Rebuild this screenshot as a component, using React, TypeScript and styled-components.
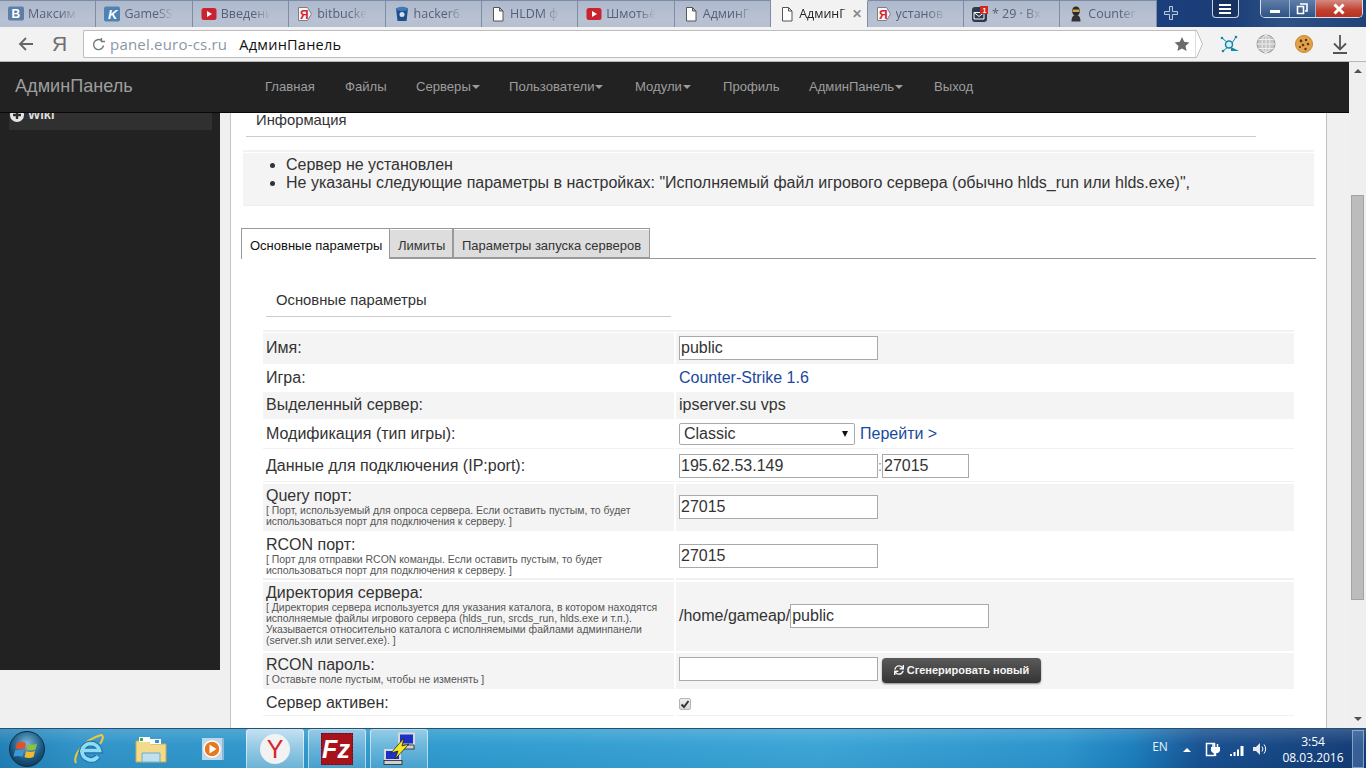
import React, { ReactNode } from "react";
import styled, { createGlobalStyle } from "styled-components";
import { FaSync } from "react-icons/fa";

const Global = createGlobalStyle`
  html, body { margin: 0; padding: 0; width: 1366px; height: 768px; overflow: hidden; }
  body { font-family: "Liberation Sans", Arial, sans-serif; color: #333; background: #f1f1f1; }
  * { box-sizing: border-box; }
`;

const Screen = styled.div`
  width: 1366px; height: 768px; display: flex; flex-direction: column; overflow: hidden;
`;

/* browser tab strip */
const TabStrip = styled.div`
  height: 27px; display: flex; flex: none;
  background: linear-gradient(90deg, #1d3f78 0%, #1a3f7c 85%, #1c3d76 90%, #2c5288 94%, #1f4279 100%);
`;
const BrowserTab = styled.div<{ $active?: boolean }>`
  width: 96.4px; height: 27px; flex: none; display: flex; align-items: center; gap: 4px;
  padding: 0 0 1px 8px;
  font: 12.5px "Open Sans", sans-serif;
  color: ${p => (p.$active ? "#222" : "#56607a")};
  background: ${p => (p.$active ? "#f2f2f2" : "linear-gradient(180deg,#aeb9cc,#b9c2d2 70%,#b4bfd0)")};
  border-right: 1px solid #7f8ca6;
  border-top: 1px solid ${p => (p.$active ? "#f2f2f2" : "#7e8ba8")};
`;
const TabIconBox = styled.span`
  width: 16px; height: 16px; flex: none; display: block;
  svg { display: block; }
`;
const TabLabel = styled.span<{ $active?: boolean }>`
  display: block; width: ${p => (p.$active ? "48px" : "50px")}; white-space: nowrap; overflow: hidden;
  -webkit-mask-image: linear-gradient(90deg, #000 ${p => (p.$active ? "88%" : "65%")}, transparent 100%);
  mask-image: linear-gradient(90deg, #000 ${p => (p.$active ? "88%" : "65%")}, transparent 100%);
`;
const TabClose = styled.span`
  margin-left: 1px; font: bold 12px "Liberation Sans", sans-serif; color: #8a8a8a;
`;
const NewTab = styled.div`
  margin: 5px 0 0 6px; width: 16px; height: 16px; flex: none;
`;
const MenuButton = styled.div`
  margin-left: 33px; width: 27px; height: 18px; flex: none;
  border: 1px solid #c4d3e6; border-top: none; border-radius: 0 0 4px 4px;
  background: rgba(20,40,80,.55);
  display: flex; align-items: center; justify-content: center;
`;
const WindowButtons = styled.div`
  margin: 0 4px 0 21px; height: 18px; width: 103px; flex: none; display: flex;
  border: 1px solid #d7e0ec; border-top: none; border-radius: 0 0 5px 5px; overflow: hidden;
`;
const WindowButton = styled.div<{ $w: number; $close?: boolean }>`
  width: ${p => p.$w}px; flex: none; display: flex; align-items: center; justify-content: center;
  border-right: ${p => (p.$close ? "none" : "1px solid #9fb2cc")};
  background: ${p => (p.$close ? "linear-gradient(180deg,#d58a82,#c2402f 60%,#b8321f)" : "linear-gradient(180deg,#5f7fa8,#2f5285)")};
`;

/* toolbar */
const Toolbar = styled.div`
  height: 35px; flex: none; display: flex; align-items: center; background: #f2f2f2;
  border-bottom: 1px solid #b6b6b6; padding-bottom: 0;
`;
const BackSlot = styled.div`
  width: 52px; padding-left: 18px; flex: none; display: flex; align-items: center;
`;
const YaGlyph = styled.div`
  width: 31px; flex: none; padding-left: 0; font: 21px "Liberation Sans", sans-serif; color: #6f6f6f;
`;
const AddressBox = styled.div`
  width: 1112px; height: 28px; flex: none; display: flex; align-items: center;
  background: #fff; border: 1px solid #bdbdbd; border-right: none; border-radius: 2px 0 0 2px;
  padding-left: 7px;
`;
const Url = styled.span`
  margin-left: 4px; font: 15px "Open Sans", sans-serif; letter-spacing: .2px; color: #8b96a6;
`;
const PageName = styled.span`
  margin-left: 12px; font: 14.5px "Open Sans", sans-serif; letter-spacing: .25px; color: #111;
`;
const StarSlot = styled.span`
  margin-left: auto; margin-right: 5px; display: flex;
`;
const AddressTip = styled.svg`
  flex: none; display: block;
`;
const ExtSlot = styled.div<{ $ml: number }>`
  margin-left: ${p => p.$ml}px; width: 24px; height: 24px; flex: none;
  svg { display: block; }
`;

/* viewport */
const Viewport = styled.div`
  flex: 1; min-height: 0; display: flex;
`;
const PageColumn = styled.div`
  width: 1349px; flex: none; display: flex; flex-direction: column;
`;
const Navbar = styled.nav`
  height: 51px; flex: none; display: flex; align-items: center; background: #222;
  border-bottom: 1px solid #080808; padding-bottom: 1px;
`;
const Brand = styled.div`
  width: 250px; flex: none; padding-left: 15px; font-size: 18.1px; color: #9d9d9d;
`;
const NavItem = styled.div<{ $w: number }>`
  width: ${p => p.$w}px; flex: none; padding-left: 15px; font-size: 13.1px; color: #9d9d9d;
  display: flex; align-items: center; white-space: nowrap;
`;
const Caret = styled.span`
  margin-left: 1px; margin-top: 1px; width: 0; height: 0;
  border-top: 4px solid #9d9d9d; border-left: 4px solid transparent; border-right: 4px solid transparent;
`;
const PageBody = styled.div`
  flex: 1; min-height: 0; display: flex; align-items: flex-start; background: #f0f0f0;
`;
const Sidebar = styled.aside`
  width: 220px; height: 557px; flex: none; background: #222; padding-left: 9px;
`;
const WikiItem = styled.div`
  width: 203px; height: 17px; background: #303030; overflow: hidden;
`;
const WikiInner = styled.div`
  margin-top: -7px; padding-left: 1px; display: flex; align-items: center; gap: 4px;
  font: bold 13px/18px "Liberation Sans", sans-serif; color: #ddd;
`;
const WikiBullet = styled.span`
  width: 14px; height: 14px; flex: none; display: block;
  svg { display: block; }
`;
const Panel = styled.main`
  width: 1097px; height: 615px; margin-left: 10px; flex: none; overflow: hidden; background: #fff;
  border-left: 1px solid #c6c6c6; border-right: 1px solid #c0c0c0; padding-left: 12px;
`;
const SectionTitle = styled.h3<{ $w: number; $ml: number }>`
  margin: 0 0 0 ${p => p.$ml}px; width: ${p => p.$w}px; padding: 0 0 9px 10px;
  font-weight: normal; font-size: 14.8px; line-height: 14px; color: #333;
  border-bottom: 1px solid #ccc;
`;
const NoticeWrap = styled.div`
  margin-top: 13px; width: 1071px; border-top: 2px solid #f2f2f2; padding-top: 1px;
`;
const Notice = styled.ul`
  margin: 0; height: 53px; padding: 3px 0 0 43px; background: #f4f4f4;
  border-bottom: 1px solid #eee;
  font-size: 16px; line-height: 18px; color: #333;
`;
const FormTabs = styled.div`
  margin: 22px 0 0 -2px; width: 1075px; height: 31px; display: flex; border-bottom: 1px solid #999;
`;
const FormTab = styled.div<{ $w: number; $active?: boolean }>`
  width: ${p => p.$w}px; height: ${p => (p.$active ? "31px" : "30px")}; flex: none;
  border: 1px solid #999; border-bottom: ${p => (p.$active ? "none" : "1px solid #999")};
  border-right: ${p => (p.$active ? "none" : "1px solid #999")};
  background: ${p => (p.$active ? "#fff" : "#ddd")};
  box-shadow: ${p => (p.$active ? "none" : "inset 0 1px 0 #fff")};
  font-size: 13px; line-height: 14px; color: ${p => (p.$active ? "#111" : "#333")};
  padding: 10px 0 0 8px;
  white-space: nowrap;
`;
const FormSection = styled.section`
  margin: 34px 0 0 20px; width: 1031px;
`;
const FormTable = styled.div`
  margin-top: 13px; border-top: 2px solid #f2f2f2;
`;
const Row = styled.div<{ $h: number; $gap?: number; $gray?: boolean; $rule?: number }>`
  height: ${p => p.$h}px; margin-top: ${p => p.$gap ?? 0}px;
  display: grid; grid-template-columns: 411px 618px; column-gap: 2px;
  & > div {
    background: ${p => (p.$gray ? "#f4f4f4" : "#fff")};
    border-bottom: ${p => p.$rule ?? 0}px solid #f0f0f0;
  }
`;
const nudge = (dy = 0) => `padding-top: ${Math.max(dy * 2, 0)}px; padding-bottom: ${Math.max(-dy * 2, 0)}px;`;
const LabelCell = styled.div<{ $dy?: number }>`
  padding-left: 3px; display: flex; flex-direction: column; justify-content: center;
  ${p => nudge(p.$dy)}
`;
const ValueCell = styled.div<{ $dy?: number }>`
  padding-left: 3px; display: flex; align-items: center; font-size: 16px; color: #333;
  ${p => nudge(p.$dy)}
`;
const Label = styled.div`
  font-size: 16px; line-height: 18px; color: #333;
`;
const Hint = styled.div`
  font-size: 10.45px; line-height: 11px; color: #555; white-space: nowrap;
`;
const Field = styled.input<{ $w?: number }>`
  width: ${p => p.$w ?? 199}px; height: 24px; padding: 0 1px; flex: none;
  border: 1px solid #a9a9a9; border-radius: 0; background: #fff;
  font: 16px "Liberation Sans", sans-serif; color: #333; outline: none;
`;
const GameLink = styled.a`
  color: #1a4a9c; text-decoration: none; font-size: 16px;
`;
const SelectWrap = styled.div`
  position: relative; width: 176px; height: 22px; flex: none;
`;
const Select = styled.select`
  appearance: none; width: 176px; height: 22px; padding: 0 0 0 4px;
  border: 1px solid #a9a9a9; border-radius: 2px; background: #fff;
  font: 16px "Liberation Sans", sans-serif; color: #333; outline: none;
`;
const SelectArrow = styled.span`
  position: absolute; right: 7px; top: 8px; width: 0; height: 0;
  border-top: 6px solid #111; border-left: 3px solid transparent; border-right: 3px solid transparent;
`;
const GoLink = styled.a`
  margin-left: 5px; color: #1a4a9c; text-decoration: none; font-size: 16px;
`;
const Colon = styled.span`
  width: 4px; flex: none; font-size: 14px; color: #888;
`;
const GenerateButton = styled.button`
  margin-left: 4px; width: 159px; height: 25px; padding: 0; flex: none; margin-top: 2px;
  display: flex; align-items: center; justify-content: center; gap: 3px;
  border: none; border-radius: 4px;
  background: linear-gradient(180deg, #5a5a5a, #333);
  box-shadow: 0 1px 2px rgba(0,0,0,.45);
  font: bold 11px "Liberation Sans", sans-serif; color: #f4f4f4;
`;
const CheckBox = styled.span`
  width: 12px; height: 12px; flex: none; display: flex; align-items: center; justify-content: center;
  border: 1px solid #b5b5b5; border-radius: 2px; background: linear-gradient(180deg,#eee,#d8d8d8);
`;

/* scrollbar */
const Scrollbar = styled.div`
  width: 17px; flex: none; display: flex; flex-direction: column; align-items: center; background: #efefef;
`;
const ArrowSlot = styled.div`
  height: 17px; display: flex; align-items: center; justify-content: center; flex: none;
`;
const ArrowUp = styled.span`
  width: 0; height: 0; border-bottom: 4px solid #505050; border-left: 4px solid transparent; border-right: 4px solid transparent;
`;
const ArrowDown = styled.span`
  width: 0; height: 0; border-top: 4px solid #505050; border-left: 4px solid transparent; border-right: 4px solid transparent;
`;
const Thumb = styled.div`
  margin-top: 116px; width: 13px; height: 405px; background: #bcbcbc; border: 1px solid #a3a3a3; flex: none;
`;
const BottomSlot = styled(ArrowSlot)`
  margin-top: auto; margin-bottom: 1px;
`;

/* taskbar */
const Taskbar = styled.footer`
  height: 40px; flex: none; display: flex; align-items: stretch;
  border-top: 1px solid #25506f;
  background:
    linear-gradient(180deg, rgba(255,255,255,.16), rgba(255,255,255,.02) 40%, rgba(0,0,0,.03)),
    linear-gradient(90deg, #1f7fb6 0%, #2f93c8 6%, #2f9bd0 35%, #3aa3d6 60%, #2a93cc 78%, #1a7dbc 83%, #164f90 88%, #123a74 100%);
`;
const PinSlot = styled.div<{ $w: number }>`
  width: ${p => p.$w}px; flex: none; display: flex; align-items: center; justify-content: center;
`;
const TaskButton = styled.div<{ $bright?: boolean }>`
  width: 58px; margin-right: 4px; flex: none; display: flex; align-items: center; justify-content: center;
  border: 1px solid rgba(255,255,255,.55); border-bottom: none; border-radius: 3px 3px 0 0;
  background: ${p => (p.$bright
    ? "linear-gradient(180deg,rgba(255,255,255,.65),rgba(255,255,255,.3))"
    : "linear-gradient(180deg,rgba(255,255,255,.4),rgba(255,255,255,.12))")};
`;
const Tray = styled.div`
  margin-left: auto; display: flex; align-items: center; color: #fff;
`;
const Lang = styled.div`
  width: 30px; font: 12px "Open Sans", sans-serif; color: #e8f2fa; margin-top: -5px; text-align: center;
`;
const TrayIcon = styled.div<{ $ml: number }>`
  margin-left: ${p => p.$ml}px; width: 16px; height: 16px; flex: none;
  svg { display: block; }
`;
const Clock = styled.div`
  margin-left: 10px; width: 70px; padding-top: 2px; text-align: center; font: 12px/16px "Open Sans", sans-serif; color: #fff;
`;
const ShowDesktop = styled.div`
  margin: 1px 2px 0 4px; width: 12px; align-self: stretch;
  border: 1px solid rgba(180,205,235,.6); background: rgba(120,160,210,.35);
`;

const Svg = ({ s = 16, vb, children }: { s?: number; vb?: string; children: ReactNode }) => (
  <svg width={s} height={s} viewBox={vb ?? `0 0 ${s} ${s}`}>{children}</svg>
);

const DocIcon = () => (
  <Svg><path d="M3.5 1.5h6l3.5 3.5v10h-9.5z M9.5 1.5v3.5h3.5" fill="#fff" stroke="#555" strokeWidth="1" /></Svg>
);
const YouTubeIcon = () => (
  <Svg><rect x="0.5" y="2" width="15" height="12" rx="2.5" fill="#c9232f" /><path d="M6 5l5 3-5 3z" fill="#fff" /></Svg>
);
const YandexTabIcon = () => (
  <Svg>
    <path d="M1.5 1.5h9l4 6.500-4 6.500h-9z" fill="#f6f6f6" stroke="#7a7f8c" />
    <text x="3" y="12.500" fontFamily="Liberation Sans" fontSize="12" fontWeight="bold" fill="#d8242c">Я</text>
  </Svg>
);

const tabs: { icon: ReactNode; label: string; active?: boolean }[] = [
  { label: "Максим", icon: <Svg><rect x="0" y="0.5" width="16" height="14" rx="2" fill="#5b7fa8" /><text x="3.500" y="12" fontFamily="Liberation Sans" fontSize="12" fontWeight="bold" fill="#fff">В</text></Svg> },
  { label: "GameSS", icon: <Svg><rect x="0" y="0.5" width="16" height="15" rx="2" fill="#4f82b4" /><text x="4" y="13" fontFamily="Liberation Sans" fontSize="13" fontWeight="bold" fontStyle="italic" fill="#fff">K</text></Svg> },
  { label: "Введени", icon: <YouTubeIcon /> },
  { label: "bitbucke", icon: <YandexTabIcon /> },
  { label: "hacker6.", icon: <Svg><path d="M2 2.500h12l-1.500 12.500h-9z" fill="#1f4f88" /><ellipse cx="8" cy="3" rx="6" ry="2.200" fill="#3f78b4" /><circle cx="8" cy="8.500" r="2.500" fill="#cfe0f0" /></Svg> },
  { label: "HLDM ф", icon: <DocIcon /> },
  { label: "Шмотьё", icon: <YouTubeIcon /> },
  { label: "АдминГ", icon: <DocIcon /> },
  { label: "АдминГ", icon: <DocIcon />, active: true },
  { label: "установ", icon: <YandexTabIcon /> },
  { label: "* 29 · Вх", icon: <Svg><rect x="0" y="1" width="15" height="15" rx="3" fill="#2d3a4c" /><path d="M2 6.500h10v6.500h-10z M2 6.500l5 4 5-4" fill="none" stroke="#fff" strokeWidth="1" /><rect x="8" y="0" width="8" height="8" fill="#d8261e" /><text x="10.500" y="6.800" fontFamily="Liberation Sans" fontSize="7" fontWeight="bold" fill="#fff">1</text></Svg> },
  { label: "Counter", icon: <Svg><ellipse cx="8" cy="5" rx="4" ry="4.500" fill="#2a2a2a" /><rect x="4.500" y="3.500" width="7" height="2.500" fill="#c9a640" /><path d="M3.500 15.500c0-5 2-6.500 4.500-6.500s4.500 1.500 4.500 6.500z" fill="#333" /></Svg> },
];

const navItems: { label: string; w: number; caret?: boolean }[] = [
  { label: "Главная", w: 80 }, { label: "Файлы", w: 71 }, { label: "Серверы", w: 93, caret: true },
  { label: "Пользователи", w: 126, caret: true }, { label: "Модули", w: 88, caret: true }, { label: "Профиль", w: 86 },
  { label: "АдминПанель", w: 125, caret: true }, { label: "Выход", w: 80 },
];

export default function App() {
  return (
    <Screen>
      <Global />
      <TabStrip>
        {tabs.map((t, i) => (
          <BrowserTab key={i} $active={t.active}>
            <TabIconBox>{t.icon}</TabIconBox>
            <TabLabel $active={t.active}>{t.label}</TabLabel>
            {t.active && <TabClose>✕</TabClose>}
          </BrowserTab>
        ))}
        <NewTab>
          <Svg><path d="M6.500 1.500h3v5h5v3h-5v5h-3v-5h-5v-3h5z" fill="rgba(60,100,160,.4)" stroke="#b9c8dc" /></Svg>
        </NewTab>
        <MenuButton>
          <Svg s={14}><path d="M1 3h12M1 7h12M1 11h12" stroke="#fff" strokeWidth="2" /></Svg>
        </MenuButton>
        <WindowButtons>
          <WindowButton $w={29}><Svg s={12}><rect x="1" y="7" width="10" height="3" fill="#fff" /></Svg></WindowButton>
          <WindowButton $w={26}><Svg s={12}><path d="M4 1h7v7h-2M1.500 3.500h6v7h-6z" fill="none" stroke="#fff" strokeWidth="1.600" /></Svg></WindowButton>
          <WindowButton $w={47} $close><Svg s={14}><path d="M2.500 2.500l9 9M11.500 2.500l-9 9" stroke="#fff" strokeWidth="3" /></Svg></WindowButton>
        </WindowButtons>
      </TabStrip>

      <Toolbar>
        <BackSlot>
          <Svg><path d="M15 8H2M8 2L2 8l6 6" fill="none" stroke="#666" strokeWidth="1.800" /></Svg>
        </BackSlot>
        <YaGlyph>Я</YaGlyph>
        <AddressBox>
          <Svg s={15}><path d="M12.500 8.500a5 5 0 1 1-2-5M10.500 1v3.500H14" fill="none" stroke="#777" strokeWidth="1.400" /></Svg>
          <Url>panel.euro-cs.ru</Url>
          <PageName>АдминПанель</PageName>
          <StarSlot>
            <Svg><path d="M8 1l2.200 4.800 5.200.6-3.900 3.500 1.100 5.100L8 12.400 3.400 15l1.100-5.100L.6 6.400l5.200-.6z" fill="#6a6a6a" /></Svg>
          </StarSlot>
        </AddressBox>
        <AddressTip width="8" height="28" viewBox="0 0 8 28">
          <path d="M0 .5h1.500L7.500 14l-6 13.500H0z" fill="#fff" stroke="#bdbdbd" />
        </AddressTip>
        <ExtSlot $ml={14}>
          <Svg s={24}>
            <path d="M5 6l6 5M19 5l-4 6M6 19l5-4" stroke="#1d7f9e" strokeWidth="1" />
            <circle cx="12" cy="12.500" r="3.500" fill="#d8f0f7" stroke="#0f86ab" strokeWidth="1.500" />
            <circle cx="5" cy="6" r="1.300" fill="#0f86ab" /><circle cx="19" cy="5" r="1.300" fill="#0f86ab" /><circle cx="6" cy="19" r="1.300" fill="#0f86ab" />
            <path d="M14 15l8 4h-8z" fill="#0f86ab" />
          </Svg>
        </ExtSlot>
        <ExtSlot $ml={13}>
          <Svg s={24}>
            <circle cx="12" cy="12" r="9" fill="#c4c4c4" stroke="#999" />
            <ellipse cx="12" cy="12" rx="4" ry="9" fill="none" stroke="#eee" />
            <path d="M3 12h18M4.500 7.500h15M4.500 16.500h15M12 3v18" stroke="#eee" />
          </Svg>
        </ExtSlot>
        <ExtSlot $ml={14}>
          <Svg s={24}>
            <circle cx="12" cy="12" r="8.500" fill="#e2a24c" stroke="#c9862e" />
            <circle cx="9" cy="9" r="1.400" fill="#5e3413" /><circle cx="14" cy="8" r="1.200" fill="#5e3413" />
            <circle cx="16" cy="12" r="1.300" fill="#5e3413" /><circle cx="11" cy="13" r="1.300" fill="#5e3413" />
            <circle cx="8" cy="15" r="1.100" fill="#5e3413" /><circle cx="13.500" cy="17" r="1.200" fill="#5e3413" />
          </Svg>
        </ExtSlot>
        <ExtSlot $ml={12}>
          <Svg s={24}><path d="M12 3v14M6 11.500l6 6 6-6" fill="none" stroke="#555" strokeWidth="1.800" /><path d="M5 21h14" stroke="#555" strokeWidth="2" /></Svg>
        </ExtSlot>
      </Toolbar>

      <Viewport>
        <PageColumn>
          <Navbar>
            <Brand>АдминПанель</Brand>
            {navItems.map(n => (
              <NavItem key={n.label} $w={n.w}>{n.label}{n.caret && <Caret />}</NavItem>
            ))}
          </Navbar>
          <PageBody>
            <Sidebar>
              <WikiItem>
                <WikiInner>
                  <WikiBullet>
                    <Svg s={14}><circle cx="7" cy="7" r="7" fill="#e6e6e6" /><path d="M7 3v8M3 7h8" stroke="#303030" strokeWidth="2.400" /></Svg>
                  </WikiBullet>
                  Wiki
                </WikiInner>
              </WikiItem>
            </Sidebar>
            <Panel>
              <SectionTitle $w={1010} $ml={3}>Информация</SectionTitle>
              <NoticeWrap>
                <Notice>
                  <li>Сервер не установлен</li>
                  <li>Не указаны следующие параметры в настройках: "Исполняемый файл игрового сервера (обычно hlds_run или hlds.exe)",</li>
                </Notice>
              </NoticeWrap>
              <FormTabs>
                <FormTab $w={148} $active>Основные параметры</FormTab>
                <FormTab $w={64}>Лимиты</FormTab>
                <FormTab $w={197}>Параметры запуска серверов</FormTab>
              </FormTabs>
              <FormSection>
                <SectionTitle $w={405} $ml={3}>Основные параметры</SectionTitle>
                <FormTable>
                  <Row $h={31} $gap={1} $gray>
                    <LabelCell $dy={-1}><Label>Имя:</Label></LabelCell>
                    <ValueCell $dy={-1}><Field defaultValue="public" /></ValueCell>
                  </Row>
                  <Row $h={28}>
                    <LabelCell><Label>Игра:</Label></LabelCell>
                    <ValueCell><GameLink>Counter-Strike 1.6</GameLink></ValueCell>
                  </Row>
                  <Row $h={27} $gray>
                    <LabelCell $dy={-1}><Label>Выделенный сервер:</Label></LabelCell>
                    <ValueCell $dy={-1}>ipserver.su vps</ValueCell>
                  </Row>
                  <Row $h={30} $rule={1}>
                    <LabelCell><Label>Модификация (тип игры):</Label></LabelCell>
                    <ValueCell>
                      <SelectWrap>
                        <Select defaultValue="Classic"><option>Classic</option></Select>
                        <SelectArrow />
                      </SelectWrap>
                      <GoLink>Перейти &gt;</GoLink>
                    </ValueCell>
                  </Row>
                  <Row $h={33} $rule={1}>
                    <LabelCell $dy={0.5}><Label>Данные для подключения (IP:port):</Label></LabelCell>
                    <ValueCell $dy={1}>
                      <Field defaultValue="195.62.53.149" />
                      <Colon>:</Colon>
                      <Field $w={87} defaultValue="27015" />
                    </ValueCell>
                  </Row>
                  <Row $h={47} $gap={2} $gray>
                    <LabelCell $dy={-1}>
                      <Label>Query порт:</Label>
                      <Hint>[ Порт, используемый для опроса сервера. Если оставить пустым, то будет<br />использоваться порт для подключения к серверу. ]</Hint>
                    </LabelCell>
                    <ValueCell $dy={-1}><Field defaultValue="27015" /></ValueCell>
                  </Row>
                  <Row $h={49} $rule={2}>
                    <LabelCell $dy={1.5}>
                      <Label>RCON порт:</Label>
                      <Hint>[ Порт для отправки RCON команды. Если оставить пустым, то будет<br />использоваться порт для подключения к серверу. ]</Hint>
                    </LabelCell>
                    <ValueCell $dy={1}><Field defaultValue="27015" /></ValueCell>
                  </Row>
                  <Row $h={69} $gap={2} $gray>
                    <LabelCell $dy={-1.5}>
                      <Label>Директория сервера:</Label>
                      <Hint>[ Директория сервера используется для указания каталога, в котором находятся<br />исполняемые файлы игрового сервера (hlds_run, srcds_run, hlds.exe и т.п.).<br />Указывается относительно каталога с исполняемыми файлами админпанели<br />(server.sh или server.exe). ]</Hint>
                    </LabelCell>
                    <ValueCell $dy={-1}>/home/gameap/<Field defaultValue="public" /></ValueCell>
                  </Row>
                  <Row $h={36} $gap={2} $gray>
                    <LabelCell $dy={-0.5}>
                      <Label>RCON пароль:</Label>
                      <Hint>[ Оставьте поле пустым, чтобы не изменять ]</Hint>
                    </LabelCell>
                    <ValueCell $dy={-2}>
                      <Field />
                      <GenerateButton><FaSync size={10} />Сгенерировать новый</GenerateButton>
                    </ValueCell>
                  </Row>
                  <Row $h={27} $rule={1}>
                    <LabelCell $dy={1}><Label>Сервер активен:</Label></LabelCell>
                    <ValueCell $dy={2}>
                      <CheckBox>
                        <Svg s={10}><path d="M1.500 5.500l2.500 2.500 4.500-6" fill="none" stroke="#333" strokeWidth="2" /></Svg>
                      </CheckBox>
                    </ValueCell>
                  </Row>
                </FormTable>
              </FormSection>
            </Panel>
          </PageBody>
        </PageColumn>
        <Scrollbar>
          <ArrowSlot><ArrowUp /></ArrowSlot>
          <Thumb />
          <BottomSlot><ArrowDown /></BottomSlot>
        </Scrollbar>
      </Viewport>

      <Taskbar>
        <PinSlot $w={54}>
          <Svg s={36}>
            <defs>
              <radialGradient id="orb" cx="50%" cy="35%" r="70%">
                <stop offset="0%" stopColor="#7fb8d8" /><stop offset="60%" stopColor="#1c5c86" /><stop offset="100%" stopColor="#0f3350" />
              </radialGradient>
            </defs>
            <circle cx="18" cy="18" r="17.500" fill="url(#orb)" stroke="#0e2f44" />
            <path d="M8 12c3-1.500 6-1 9 .3l-1.500 6c-3-1-5.500-1.300-9-.3z" fill="#e2502c" />
            <path d="M19 12.800c3 1.200 6 1.200 9-.3l-1.500 6c-3 1.400-6 1.200-9 .3z" fill="#8dc13f" />
            <path d="M6 19.500c3-1 6-.8 9 .3l-1.500 6c-3-1-6-1.200-9 0z" fill="#3a9ad9" />
            <path d="M17 20.300c3 1 6 1.200 9-.3l-1.500 6c-3 1.400-6 1.300-9 .2z" fill="#f4b82c" />
          </Svg>
        </PinSlot>
        <PinSlot $w={70}>
          <Svg s={32}>
            <path d="M3 30C0 24 8 8 28 2c3 0 2 5-1 9" fill="none" stroke="#f1c838" strokeWidth="2" />
            <path d="M9 17.500h17.500a9 9 0 0 0-17.500 0z M9 17.500a9 9 0 0 0 16 6" fill="none" stroke="#1f6fa8" strokeWidth="6" />
            <path d="M9 17.500h17.500a9 9 0 0 0-17.500 0z M9 17.500a9 9 0 0 0 16 6" fill="none" stroke="#8fdcf7" strokeWidth="3.600" />
          </Svg>
        </PinSlot>
        <PinSlot $w={54}>
          <Svg s={32}>
            <path d="M1 8h13l2 3h15v18H1z" fill="#f2dc8c" stroke="#c9aa58" />
            <rect x="4" y="4" width="11" height="5" fill="#fff" /><rect x="5" y="5" width="3" height="3" fill="#3fae4a" />
            <rect x="15" y="6" width="11" height="5" fill="#fff" /><rect x="20" y="7" width="4" height="3" fill="#3b8fd6" />
            <path d="M7 20h18v9H7z" fill="#bfe0ee" stroke="#7aa9c0" />
          </Svg>
        </PinSlot>
        <PinSlot $w={68}>
          <Svg s={30}>
            <rect x="9" y="4" width="18" height="22" fill="#8cb9d8" /><rect x="5" y="4" width="20" height="22" fill="#bcd8ea" />
            <circle cx="15" cy="15" r="8" fill="#e8781e" stroke="#fff" strokeWidth="1.500" />
            <path d="M12.500 10.500l7 4.500-7 4.500z" fill="#fff" />
          </Svg>
        </PinSlot>
        <TaskButton $bright>
          <Svg s={30}>
            <circle cx="15" cy="15" r="15" fill="#f2f2f2" />
            <text x="15" y="24" textAnchor="middle" fontFamily="Liberation Sans" fontSize="25" fill="#d8242c">Y</text>
          </Svg>
        </TaskButton>
        <TaskButton>
          <Svg s={32}>
            <rect x="0" y="0" width="32" height="32" fill="#a8121a" stroke="#5e0a0e" strokeWidth="1.500" strokeDasharray="2 1.500" />
            <text x="15" y="25" textAnchor="middle" fontFamily="Liberation Sans" fontSize="25" fontWeight="bold" fontStyle="italic" fill="#fff">Fz</text>
          </Svg>
        </TaskButton>
        <TaskButton>
          <Svg s={34}>
            <rect x="17" y="1.500" width="15" height="11" fill="#1c2fc8" stroke="#d8d8d8" strokeWidth="2" />
            <rect x="17" y="13" width="15" height="4" fill="#d0d0d0" stroke="#222" strokeWidth=".8" />
            <rect x="3" y="18" width="15" height="10" fill="#1c2fc8" stroke="#d8d8d8" strokeWidth="2" />
            <rect x="2" y="28.500" width="18" height="4" fill="#d0d0d0" stroke="#222" strokeWidth=".8" />
            <path d="M22 6L9 21l7-2-3 8 14-15-7 2z" fill="#f6ea1e" stroke="#222" strokeWidth=".8" />
          </Svg>
        </TaskButton>
        <Tray>
          <Lang>EN</Lang>
          <TrayIcon $ml={5}><Svg><path d="M3 11l4-4 4 4z" fill="#fff" /></Svg></TrayIcon>
          <TrayIcon $ml={9}>
            <Svg><path d="M1.500 2.500h8v12h-8z" fill="none" stroke="#fff" strokeWidth="1.500" /><path d="M6 6h9v4l-2 2h-5l-2-2z" fill="#fff" /><path d="M8 3v3M12.500 3v3M10.500 12v3" stroke="#fff" strokeWidth="1.500" /></Svg>
          </TrayIcon>
          <TrayIcon $ml={8}>
            <Svg><path d="M1 13h2v2H1zM4.500 11h2v4h-2zM8 8.500h2V15H8zM11.500 5h3v10h-3z" fill="#fff" /></Svg>
          </TrayIcon>
          <TrayIcon $ml={7}>
            <Svg><path d="M1 6h3l4-4v12l-4-4H1z" fill="#e8e8e8" /><path d="M10 5.500a4 4 0 0 1 0 5M12 3.500a7 7 0 0 1 0 9" fill="none" stroke="#fff" /></Svg>
          </TrayIcon>
          <Clock>3:54<br />08.03.2016</Clock>
          <ShowDesktop />
        </Tray>
      </Taskbar>
    </Screen>
  );
}
